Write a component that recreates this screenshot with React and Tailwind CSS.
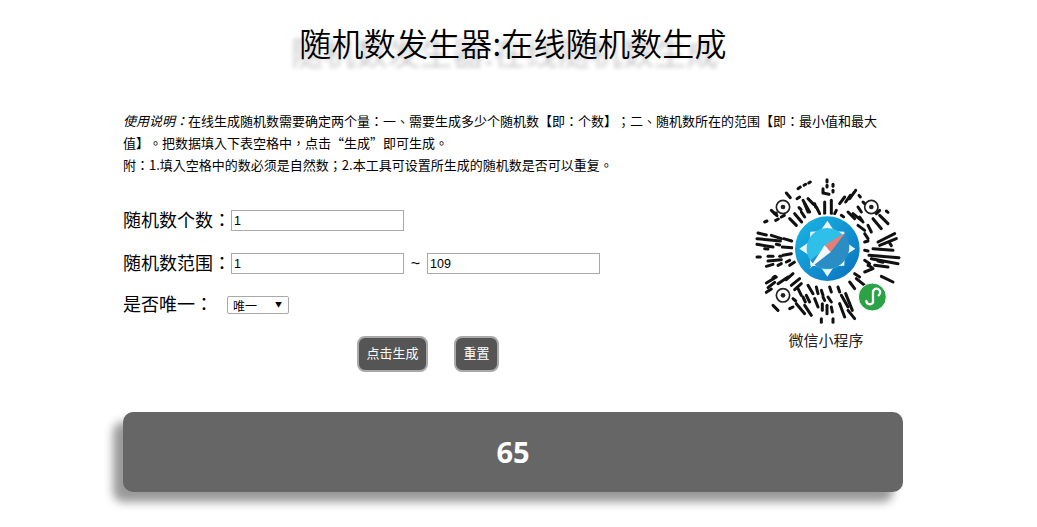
const segs = [
[175,55,182,50],[193,45,198,42],[207,38,212,35],[140,68,152,82],[172,85,180,80],[95,120,112,136],[75,155,82,152],[108,150,116,146],[125,140,134,135],[105,130,110,128],
[190,90,210,125],[205,85,222,102],[225,100,228,110],[185,125,195,140],[165,130,186,155],[150,145,170,165],[178,112,184,118],
[55,188,80,194],[52,205,122,212],[52,222,100,230],[95,195,125,205],[132,205,156,212],[128,230,158,232],[110,222,120,224],[52,260,62,260],[85,258,100,258],[85,272,125,268],[130,255,155,250],[80,288,100,282],[115,285,125,280],[140,275,150,270],[120,258,124,258],[150,285,165,275],[75,235,85,236],
[80,338,110,320],[85,352,105,336],[115,340,145,320],[80,366,95,356],[140,328,160,310],[155,345,180,325],[165,358,185,340],[100,322,106,318],[100,405,115,420],[150,415,160,410],[170,400,195,430],[195,405,215,435],[175,355,185,375],[205,345,220,370],[230,350,235,370],[200,375,210,395],[225,385,235,410],[190,380,197,395],[160,385,168,392],
[248,400,248,420],[262,405,262,430],[245,445,245,456],[280,445,280,456],[265,380,275,395],[295,350,300,365],[270,350,275,365],[305,375,325,410],[318,370,338,420],[300,400,315,440],[325,420,345,445],[275,410,278,425],[245,360,250,375],[250,380,255,390],
[330,335,345,355],[350,325,375,345],[375,305,400,295],[425,318,460,335],[385,285,395,290],[405,285,445,290],[388,255,478,262],[395,265,475,280],[375,270,390,280],[415,272,430,276],[400,235,460,240],[415,215,465,190],[420,225,470,205],[450,218,455,226],[375,215,385,212],[375,190,385,205],[355,165,375,180],[385,165,395,185],[360,140,370,155],[400,145,425,175],[420,135,445,160],[410,130,420,120],[440,122,445,126],[355,110,365,125],[340,130,365,150],[325,125,345,145],[375,240,385,242],[345,310,360,320],
[262,28,262,35],[262,45,262,50],[250,55,250,65],[280,42,280,48],[250,68,268,72],[280,60,280,65],[255,95,255,130],[275,90,275,130],[290,120,285,130],[300,100,315,80],[318,95,332,75],[330,85,348,60],[305,135,312,140],[230,110,240,130],[195,100,205,125],[358,75,362,80],[370,95,375,100]
];
const font = { fontFamily: '"Noto Sans CJK TC", "Liberation Sans", sans-serif' };
const arial = { fontFamily: '"Liberation Sans", sans-serif' };
function Ring({ cx, cy }) {
  return (
    <g>
      <circle cx={cx} cy={cy} r="20" fill="none" stroke="#222" strokeWidth="5" />
      <circle cx={cx} cy={cy} r="7" fill="#222" />
    </g>
  );
}
function QR() {
  const star = [];
  for (let i = 0; i < 8; i++) {
    const a = (i * Math.PI) / 4;
    const l = i % 2 === 0 ? 84 : 72;
    const w = Math.PI / 9;
    const p = (r, t) => `${263 + r * Math.sin(t)},${235 - r * Math.cos(t)}`;
    star.push(<polygon key={i} points={`${p(l, a)} ${p(58, a + w)} ${p(58, a - w)}`} fill="#e8f4fa" />);
  }
  return (
    <svg width="150" height="150" viewBox="40 20 450 450" className="block">
      <defs>
        <linearGradient id="bg" x1="0" y1="0" x2="1" y2="1">
          <stop offset="0" stopColor="#1ab8e6" />
          <stop offset="1" stopColor="#0a6fbd" />
        </linearGradient>
      </defs>
      <g stroke="#111" strokeWidth="9" strokeLinecap="round">
        {segs.map((s, i) => <line key={i} x1={s[0]} y1={s[1]} x2={s[2]} y2={s[3]} />)}
      </g>
      <Ring cx={130} cy={110} />
      <Ring cx={395} cy={110} />
      <Ring cx={130} cy={375} />
      <circle cx="263" cy="235" r="103" fill="#fff" />
      <circle cx="263" cy="235" r="97" fill="url(#bg)" />
      {star}
      <circle cx="263" cy="235" r="62" fill="#2fc0ea" />
      <path d="M315 190 A62 62 0 0 1 212 270 Z" fill="#2a8dc4" />
      <polygon points="317,187 255,225 273,245" fill="#e87d74" />
      <polygon points="209,295 255,225 273,245" fill="#f4f7f8" />
      <circle cx="398" cy="380" r="42" fill="#2aa245" stroke="#fff" strokeWidth="3" />
      <path d="M380 392 a11 11 0 0 0 20 5 v-34 a11 11 0 1 1 17 12" fill="none" stroke="#fff" strokeWidth="7" strokeLinecap="round" />
    </svg>
  );
}
export default function App() {
  return (
    <div className="min-h-[527px] overflow-hidden">
      <div className="w-[780px] ml-[123px] text-black [text-spacing-trim:space-all]" style={font}>
        <h1 className="text-[32px] leading-[48px] font-[350] tracking-[0.2px] text-center pt-[18px] h-[109px] [text-shadow:-8px_9px_4px_#c4c4c4]">随机数发生器:在线随机数生成</h1>
        <p className="text-[13px] leading-[22px] h-[68px] pt-[1px]">
          <em>使用说明：</em>在线生成随机数需要确定两个量：一、需要生成多少个随机数【即：个数】；二、随机数所在的范围【即：最小值和最大<br />
          值】。把数据填入下表空格中，点击“生成”即可生成。<br />
          附：1.填入空格中的数必须是自然数；2.本工具可设置所生成的随机数是否可以重复。
        </p>
        <div className="flex justify-between h-[235px]">
          <div className="pt-[33px] flex flex-col">
            <div className="flex items-center h-[21px] text-[18px]">
              <span className="w-[108px] whitespace-nowrap -mt-[3px]">随机数个数：</span>
              <input readOnly value="1" className="w-[173px] h-[21px] border border-[#a9a9a9] px-[2px] text-[12.5px] outline-none" style={arial} />
            </div>
            <div className="flex items-center h-[21px] text-[18px] mt-[22px]">
              <span className="w-[108px] whitespace-nowrap -mt-[3px]">随机数范围：</span>
              <input readOnly value="1" className="w-[173px] h-[21px] border border-[#a9a9a9] px-[2px] text-[12.5px] outline-none" style={arial} />
              <span className="w-[23px] text-center text-[16px]" style={arial}>~</span>
              <input readOnly value="109" className="w-[173px] h-[21px] border border-[#a9a9a9] px-[2px] text-[12.5px] outline-none" style={arial} />
            </div>
            <div className="flex items-center h-[21px] text-[18px] mt-[20px]">
              <span className="w-[104px] whitespace-nowrap -mt-[3px]">是否唯一：</span>
              <div className="relative w-[62px] h-[18px] border border-[#a9a9a9] rounded-[2px] text-[12px] leading-[17px] pl-[5px]">
                唯一
                <span className="absolute right-[6px] top-[1px] text-[7px] leading-[12px]">▼</span>
              </div>
            </div>
            <div className="flex mt-[21px] pl-[234px] gap-[26px]">
              <button className="h-[36px] w-[71px] rounded-[8px] border-2 border-[#a9a9a9] bg-[#555] text-white text-[13px] font-normal leading-[28px] pb-[2px]">点击生成</button>
              <button className="h-[36px] w-[45px] rounded-[8px] border-2 border-[#a9a9a9] bg-[#555] text-white text-[13px] font-normal leading-[28px] pb-[2px]">重置</button>
            </div>
          </div>
          <div className="w-[150px]">
            <QR />
            <div className="text-[15px] leading-[22px] text-center text-[#222] pr-[4px] mt-[2px]">微信小程序</div>
          </div>
        </div>
        <div className="h-[80px] rounded-[10px] bg-[#666] shadow-[-10px_10px_10px_#999] flex items-center justify-center text-white text-[29px] font-bold" style={{ fontFamily: '"Open Sans", sans-serif' }}>
          65
        </div>
      </div>
    </div>
  );
}
